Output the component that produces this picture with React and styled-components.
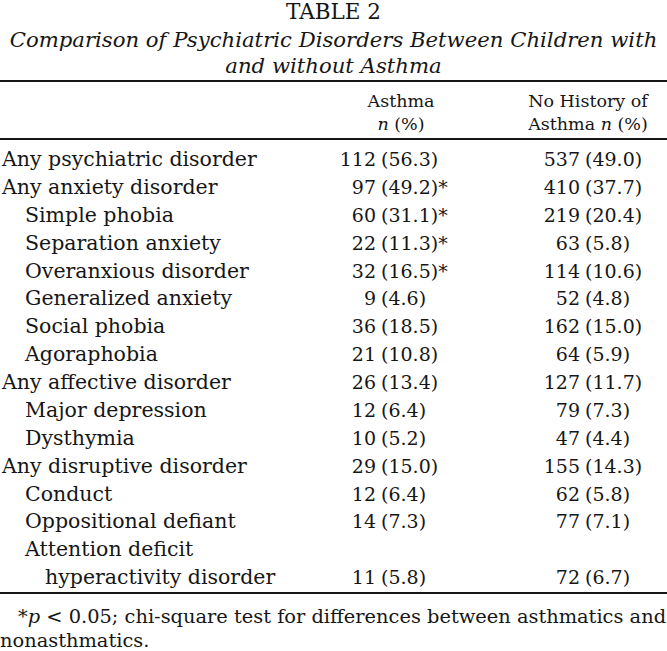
import React from 'react'
import styled, { createGlobalStyle } from 'styled-components'

const rows = [
  { label: 'Any psychiatric disorder', a: ['112', '(56.3)'], b: ['537', '(49.0)'] },
  { label: 'Any anxiety disorder', a: ['97', '(49.2)*'], b: ['410', '(37.7)'] },
  { label: 'Simple phobia', sub: true, a: ['60', '(31.1)*'], b: ['219', '(20.4)'] },
  { label: 'Separation anxiety', sub: true, a: ['22', '(11.3)*'], b: ['63', '(5.8)'] },
  { label: 'Overanxious disorder', sub: true, a: ['32', '(16.5)*'], b: ['114', '(10.6)'] },
  { label: 'Generalized anxiety', sub: true, a: ['9', '(4.6)'], b: ['52', '(4.8)'] },
  { label: 'Social phobia', sub: true, a: ['36', '(18.5)'], b: ['162', '(15.0)'] },
  { label: 'Agoraphobia', sub: true, a: ['21', '(10.8)'], b: ['64', '(5.9)'] },
  { label: 'Any affective disorder', a: ['26', '(13.4)'], b: ['127', '(11.7)'] },
  { label: 'Major depression', sub: true, a: ['12', '(6.4)'], b: ['79', '(7.3)'] },
  { label: 'Dysthymia', sub: true, a: ['10', '(5.2)'], b: ['47', '(4.4)'] },
  { label: 'Any disruptive disorder', a: ['29', '(15.0)'], b: ['155', '(14.3)'] },
  { label: 'Conduct', sub: true, a: ['12', '(6.4)'], b: ['62', '(5.8)'] },
  { label: 'Oppositional defiant', sub: true, a: ['14', '(7.3)'], b: ['77', '(7.1)'] },
  { label: 'Attention deficit', sub: true },
  { label: 'hyperactivity disorder', sub: 2, a: ['11', '(5.8)'], b: ['72', '(6.7)'] },
]

export default function App() {
  return (
    <>
      <GlobalStyle />
      <Page>
        <Title>TABLE 2</Title>
        <Caption>
          Comparison of Psychiatric Disorders Between Children with
          <br />
          and without Asthma
        </Caption>
        <HeadRow>
          <span />
          <HeadCell>
            Asthma
            <br />
            <em>n</em> (%)
          </HeadCell>
          <HeadCell $shift>
            No History of
            <br />
            Asthma <em>n</em> (%)
          </HeadCell>
        </HeadRow>
        <Body>
          {rows.map((r) => (
            <Row key={r.label}>
              <Label $indent={r.sub === 2 ? 45 : r.sub ? 25 : 2}>{r.label}</Label>
              <Count>{r.a ? r.a[0] : ''}</Count>
              <Pct>{r.a ? r.a[1] : ''}</Pct>
              <Count>{r.b ? r.b[0] : ''}</Count>
              <Pct>{r.b ? r.b[1] : ''}</Pct>
            </Row>
          ))}
        </Body>
        <Note>
          <NoteFirst>
            *<em>p</em> &lt; 0.05; chi-square test for differences between asthmatics and
          </NoteFirst>
          nonasthmatics.
        </Note>
      </Page>
    </>
  )
}

const GlobalStyle = createGlobalStyle`
    body {
        margin: 0;
        background: #fff;
        color: #161616;
        font-family: "DejaVu Serif", serif;
    }
`;

const Page = styled.div`
    width: 667px;
    height: 651px;
    overflow: hidden;
`;

const Title = styled.div`
    text-align: center;
    font-size: 21.5px;
    line-height: 24px;
`;

const Caption = styled.div`
    margin-top: 3px;
    text-align: center;
    font-style: italic;
    font-size: 21.2px;
    line-height: 26px;
    white-space: nowrap;
    padding-bottom: 1px;
    border-bottom: 2px solid #161616;
`;

const HeadRow = styled.div`
    display: grid;
    grid-template-columns: 330px 142px 1fr;
    padding-top: 8px;
    padding-bottom: 2px;
    border-bottom: 2px solid #161616;
    font-size: 17.5px;
    line-height: 23px;
`;

const HeadCell = styled.div`
    text-align: center;
    padding-left: ${(p) => (p.$shift ? '37px' : '0')};
    white-space: nowrap;
`;

const Body = styled.div`
    padding-top: 6px;
    border-bottom: 2px solid #161616;
`;

const Row = styled.div`
    display: grid;
    grid-template-columns: 330px 46px 158px 46px 1fr;
    font-size: 19px;
    line-height: 27.87px;
    white-space: nowrap;
`;

const Label = styled.div`
    padding-left: ${(p) => p.$indent}px;
    font-size: 20.5px;
`;

const Count = styled.div`
    text-align: right;
`;

const Pct = styled.div`
    padding-left: 5px;
`;

const Note = styled.div`
    margin-top: 13px;
    font-size: 19.4px;
    line-height: 20px;
    white-space: nowrap;
`;

const NoteFirst = styled.div`
    padding-left: 18px;
    margin-bottom: 4px;
`;
